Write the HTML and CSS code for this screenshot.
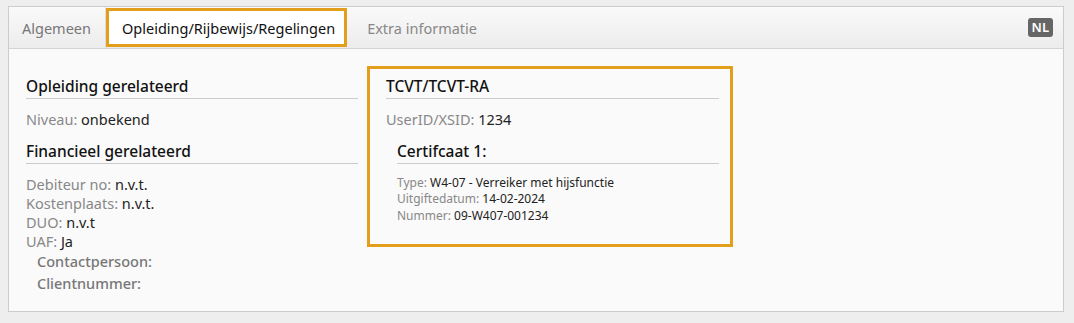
FILE: index.html
```html
<!DOCTYPE html>
<html>
<head>
  <title>Cursist - Opleiding</title>
  <link rel="stylesheet" href="styles.css">
</head>
<body>
  <div class="panel">
    <div class="tabs">
      <div class="tab">Algemeen</div>
      <div class="tab active">Opleiding/Rijbewijs/Regelingen</div>
      <div class="tab">Extra informatie</div>
      <span class="lang">NL</span>
    </div>

    <div class="content">
      <div class="column">
        <h3>Opleiding gerelateerd</h3>
        <div class="fields">
          <div><span class="label">Niveau:</span> onbekend</div>
        </div>

        <h3>Financieel gerelateerd</h3>
        <div class="fields">
          <div><span class="label">Debiteur no:</span> n.v.t.</div>
          <div><span class="label">Kostenplaats:</span> n.v.t.</div>
          <div><span class="label">DUO:</span> n.v.t</div>
          <div><span class="label">UAF:</span> Ja</div>
        </div>
        <div class="sub-fields">
          <div><span class="label">Contactpersoon:</span></div>
          <div><span class="label">Clientnummer:</span></div>
        </div>
      </div>

      <div class="column highlight">
        <h3>TCVT/TCVT-RA</h3>
        <div class="fields">
          <div><span class="label">UserID/XSID:</span> 1234</div>
        </div>

        <div class="certificate">
          <h3>Certifcaat 1:</h3>
          <div class="small-fields">
            <div><span class="label">Type:</span> W4-07 - Verreiker met hijsfunctie</div>
            <div><span class="label">Uitgiftedatum:</span> 14-02-2024</div>
            <div><span class="label">Nummer:</span> 09-W407-001234</div>
          </div>
        </div>
      </div>
    </div>
  </div>
</body>
</html>
```

FILE: styles.css
```css
/* CSS styling for the page */
body {
  font-family: "Noto Sans", "Open Sans", Arial, sans-serif;
  margin: 0;
  padding: 6px 10px 0 8px;
  background-color: #eeeeee;
  color: #222;
}

.panel {
  border: 1px solid #cccccc;
  background-color: #fafafa;
  height: 306px;
  box-sizing: border-box;
}

.tabs {
  display: flex;
  align-items: stretch;
  height: 41px;
  background: linear-gradient(#fafafa, #ececec);
  border-bottom: 1px solid #d4d4d4;
  font-size: 14.5px;
}

.tab {
  display: flex;
  align-items: center;
  padding: 0 14px 0 13px;
  color: #777;
  border-right: 1px solid #dddddd;
}

.tab.active {
  background-color: #ffffff;
  color: #111;
  padding: 0 11px 0 16px;
  margin-bottom: -1px;
  outline: 3px solid #e39e1c;
  outline-offset: -3px;
  margin-top: 1px;
  height: 39px;
}

.tab:last-of-type {
  border-right: none;
  padding-left: 20px;
  color: #888;
}

.lang {
  margin-left: auto;
  margin-right: 10px;
  align-self: center;
  background-color: #666666;
  color: #fff;
  font-size: 13px;
  font-weight: 600;
  padding: 1px 4px;
  border-radius: 3px;
  line-height: 17px;
}

.content {
  display: flex;
  align-items: flex-start;
  gap: 9px;
  padding: 17px 18px 0 17px;
}

.column {
  width: 332px;
}

.column.highlight {
  width: 366px;
  box-sizing: border-box;
  border: 3px solid #e39e1c;
  padding: 7px 11px 20px 16px;
}

.column:first-child {
  padding-top: 10px;
}

h3 {
  font-size: 15.5px;
  font-weight: 500;
  line-height: 20px;
  margin: 0;
  padding-bottom: 2px;
  border-bottom: 1px solid #cccccc;
  color: #111;
}

.fields {
  font-size: 14.5px;
  line-height: 19px;
  margin: 11px 0 12px 0;
}

.label {
  color: #888;
}

.sub-fields {
  font-size: 14.5px;
  line-height: 22px;
  margin: -13px 0 0 11px;
}

.sub-fields .label {
  color: #777;
  font-weight: 500;
}

.certificate {
  margin-left: 11px;
}

.small-fields {
  font-size: 12px;
  line-height: 16.4px;
  margin-top: 11px;
}
```
